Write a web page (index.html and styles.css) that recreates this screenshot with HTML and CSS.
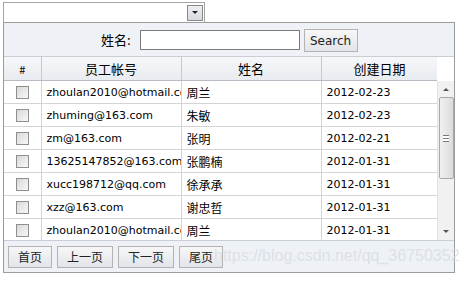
FILE: index.html
```html
<!DOCTYPE html>
<html lang="zh-CN">
<head>
    <meta charset="UTF-8">
    <title>员工列表</title>
    <link rel="stylesheet" href="styles.css">
</head>
<body>
    <div class="combo">
        <span class="combo-btn"><span class="arrow-down"></span></span>
    </div>

    <div class="panel">
        <div class="search-bar">
            <label class="search-label">姓名:</label>
            <input type="text" class="search-input">
            <button class="btn search-btn">Search</button>
        </div>

        <div class="grid">
            <div class="grid-view">
                <table class="grid-table">
                    <colgroup>
                        <col class="c-check">
                        <col class="c-account">
                        <col class="c-name">
                        <col class="c-date">
                    </colgroup>
                    <thead>
                        <tr>
                            <th class="hash">#</th>
                            <th>员工帐号</th>
                            <th>姓名</th>
                            <th>创建日期</th>
                        </tr>
                    </thead>
                    <tbody>
                        <tr><td class="check"><span class="box"></span></td><td>zhoulan2010@hotmail.com</td><td class="cn">周兰</td><td>2012-02-23</td></tr>
                        <tr><td class="check"><span class="box"></span></td><td>zhuming@163.com</td><td class="cn">朱敏</td><td>2012-02-23</td></tr>
                        <tr><td class="check"><span class="box"></span></td><td>zm@163.com</td><td class="cn">张明</td><td>2012-02-21</td></tr>
                        <tr><td class="check"><span class="box"></span></td><td>13625147852@163.com</td><td class="cn">张鹏楠</td><td>2012-01-31</td></tr>
                        <tr><td class="check"><span class="box"></span></td><td>xucc198712@qq.com</td><td class="cn">徐承承</td><td>2012-01-31</td></tr>
                        <tr><td class="check"><span class="box"></span></td><td>xzz@163.com</td><td class="cn">谢忠哲</td><td>2012-01-31</td></tr>
                        <tr><td class="check"><span class="box"></span></td><td>zhoulan2010@hotmail.com</td><td class="cn">周兰</td><td>2012-01-31</td></tr>
                    </tbody>
                </table>
            </div>
            <div class="scrollbar">
                <div class="head-gap"></div>
                <div class="track">
                    <span class="arrow-up"></span>
                    <div class="thumb"><span class="grip"></span></div>
                    <span class="arrow-down small"></span>
                </div>
            </div>
        </div>

        <div class="pager">
            <button class="btn">首页</button>
            <button class="btn">上一页</button>
            <button class="btn">下一页</button>
            <button class="btn">尾页</button>
        </div>
    </div>

    <div class="watermark">https://blog.csdn.net/qq_36750352</div>
</body>
</html>
```

FILE: styles.css
```css
body {
    margin: 0;
    font-family: "DejaVu Sans", "Noto Sans CJK SC", sans-serif;
    font-size: 11px;
    color: #000;
    background: #fff;
}
.combo {
    margin: 2px 0 0 3px;
    width: 199px;
    height: 19px;
    border: 1px solid #a5a5a5;
    border-bottom: none;
    display: flex;
    justify-content: flex-end;
    align-items: center;
    padding-right: 1px;
}
.combo-btn {
    width: 14px;
    height: 14px;
    border: 1px solid #8a8a8a;
    background: linear-gradient(#eceef2, #d6d9e0);
    display: flex;
    align-items: center;
    justify-content: center;
}
.arrow-down {
    width: 0;
    height: 0;
    border-left: 3px solid transparent;
    border-right: 3px solid transparent;
    border-top: 3px solid #222;
}
.arrow-up {
    width: 0;
    height: 0;
    border-left: 3px solid transparent;
    border-right: 3px solid transparent;
    border-bottom: 3px solid #555;
    margin: 7px 0 6px;
}
.arrow-down.small {
    border-top-color: #555;
    margin-top: auto;
    margin-bottom: 7px;
}
.panel {
    margin-left: 3px;
    width: 450px;
    border: 1px solid #9c9c9c;
    background: #eef1f5;
}
.search-bar {
    height: 33px;
    display: flex;
    align-items: center;
    padding-left: 97px;
}
.search-label {
    font-size: 13px;
    font-family: "Noto Sans CJK SC", sans-serif;
    margin-right: 9px;
}
.search-input {
    width: 154px;
    height: 16px;
    border: 1px solid #7a7a7a;
    padding: 1px 2px;
    margin: 0 4px 0 0;
    font: inherit;
    background: #fff;
}
.btn {
    font-family: "DejaVu Sans", "Noto Sans CJK SC", sans-serif;
    font-size: 12px;
    height: 23px;
    padding: 0 9px;
    border: 1px solid #b3b3b3;
    background: linear-gradient(#f7f7f7, #e2e4e8);
    color: #222;
    cursor: pointer;
}
.search-btn {
    width: 54px;
    padding: 0;
    margin-top: 2px;
}
.grid {
    display: flex;
    background: #fff;
    height: 183px;
    border-top: 1px solid #c9ced6;
}
.grid-view {
    width: 433px;
    overflow: hidden;
}
.grid-table {
    border-collapse: collapse;
    table-layout: fixed;
    width: 434px;
}
.c-check { width: 37px; }
.c-account { width: 140px; }
.c-name { width: 140px; }
.c-date { width: 117px; }
.grid-table th {
    height: 23px;
    padding: 0;
    font-weight: normal;
    font-size: 13px;
    font-family: "Noto Sans CJK SC", sans-serif;
    background: linear-gradient(#f6f7f9, #e8ebef);
    border-right: 1px solid #c6c9ce;
    border-bottom: 1px solid #b7bcc4;
    text-align: center;
}
.grid-table th.hash {
    font-size: 11px;
}
.grid-table td {
    height: 22px;
    padding: 0 0 0 5px;
    border-right: 1px solid #d4d4d4;
    border-bottom: 1px solid #d4d4d4;
    white-space: nowrap;
    overflow: hidden;
    text-overflow: clip;
}
.grid-table td.cn {
    font-family: "Noto Sans CJK SC", sans-serif;
    font-size: 12px;
}
.grid-table td.check {
    padding: 0;
    text-align: center;
}
.box {
    display: inline-block;
    width: 11px;
    height: 11px;
    border: 1px solid #8f8f8f;
    background: linear-gradient(135deg, #d8d8d8, #f8f8f8);
    vertical-align: middle;
}
.scrollbar {
    width: 17px;
    display: flex;
    flex-direction: column;
}
.head-gap {
    height: 24px;
    background: #fff;
}
.track {
    flex: 1;
    background: #f1f1f1;
    border-left: 1px solid #e2e2e2;
    display: flex;
    flex-direction: column;
    align-items: center;
}
.thumb {
    width: 13px;
    height: 80px;
    border: 1px solid #a8a8a8;
    border-radius: 2px;
    background: linear-gradient(90deg, #f0f0f0, #dcdcdc);
    display: flex;
    align-items: center;
    justify-content: center;
}
.grip {
    width: 6px;
    height: 5px;
    border-top: 1px solid #777;
    border-bottom: 1px solid #777;
    background: linear-gradient(#fff 0 2px, #777 2px 3px, #fff 3px);
}
.pager {
    height: 31px;
    display: flex;
    align-items: center;
    gap: 5px;
    padding-left: 4px;
    border-top: 1px solid #c9ced6;
}
.pager .btn {
    font-family: "Noto Sans CJK SC", sans-serif;
    height: 22px;
}
.watermark {
    position: absolute;
    left: 214px;
    top: 247px;
    font-family: "Liberation Sans", sans-serif;
    font-size: 16px;
    color: rgba(215, 220, 228, 0.8);
    pointer-events: none;
}
```
